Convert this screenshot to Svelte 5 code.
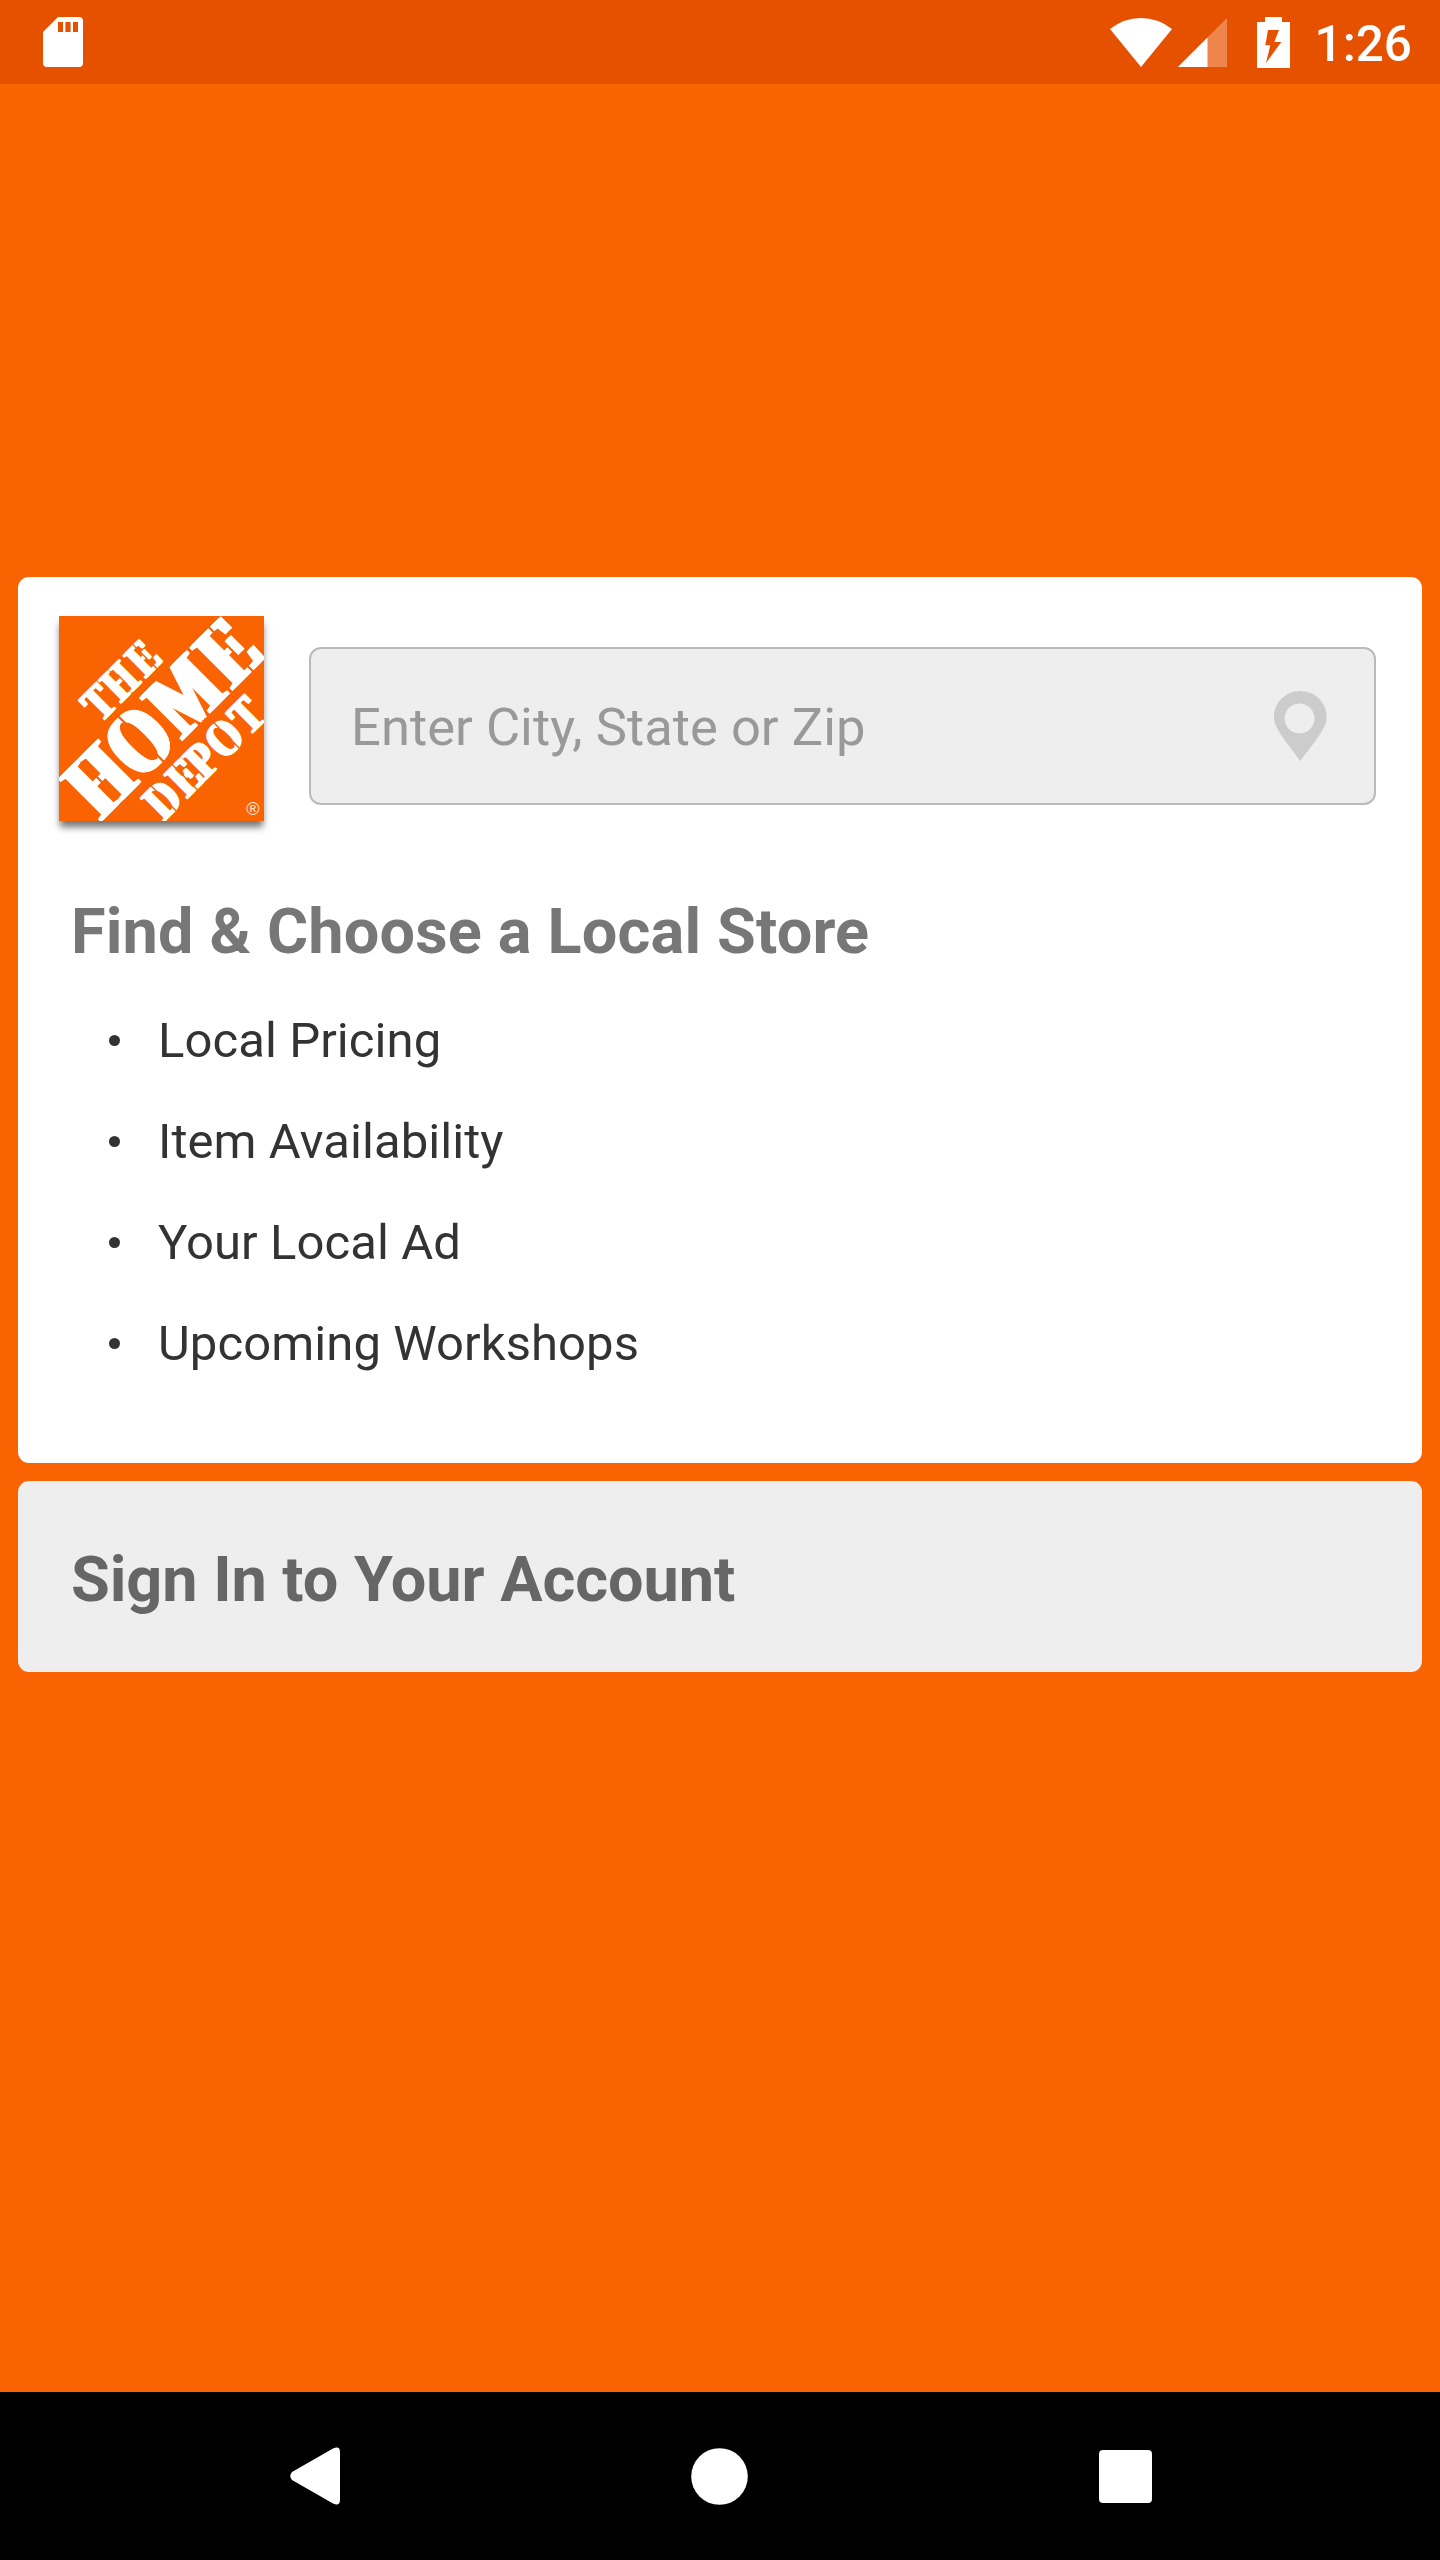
<script>
  const benefits = ['Local Pricing', 'Item Availability', 'Your Local Ad', 'Upcoming Workshops'];
</script>

<div class="screen">
  <header class="status">
    <svg class="sd" width="40" height="50" viewBox="0 0 40 50">
      <path fill="#fff" fill-rule="evenodd" d="M15 0H36a4 4 0 0 1 4 4V46a4 4 0 0 1-4 4H4a4 4 0 0 1-4-4V15ZM15 5V15H20V5ZM22.4 5V15H27.6V5ZM30 5V15H35V5Z" />
    </svg>
    <div class="indicators">
      <svg width="62" height="49" viewBox="0 0 62 49">
        <path fill="#fff" d="M0 11Q14 0 31 0T62 11L31 49Z" />
      </svg>
      <svg class="signal" width="49" height="49" viewBox="0 0 49 49">
        <path fill="#fff" fill-opacity=".3" d="M0 49H49V0Z" />
        <path fill="#fff" d="M0 49H29.5V19.5Z" />
      </svg>
      <svg class="battery" width="33" height="51" viewBox="0 0 33 51">
        <path fill="#fff" fill-rule="evenodd" d="M8 0H25V5H33V51H0V5H8ZM11 13L8.3 28.3H13.3L9 46L24.3 25H17.3L22 13Z" />
      </svg>
      <span class="time">1:26</span>
    </div>
  </header>

  <main>
    <section class="card finder">
      <div class="top">
        <svg class="logo" width="205" height="205" viewBox="0 0 205 205">
          <defs>
            <clipPath id="tile"><rect width="205" height="205" /></clipPath>
          </defs>
          <rect width="205" height="205" fill="#f96302" />
          <g clip-path="url(#tile)">
            <g transform="translate(.5 .5) rotate(-45)" class="brand">
              <text id="w1" transform="translate(0 104.7) scale(.76 1)" font-size="49" x="-60 -23 23">THE</text>
              <text id="w2" transform="translate(0 174.4) scale(.74 1)" font-size="92" x="-154 -79 1 97">HOME</text>
              <text id="w3" transform="translate(0 219)  scale(.78 1)" font-size="51" x="-91 -49 -16 19 63">DEPOT</text>
              <!-- shifted copies thicken the upright stems -->
              <use href="#w1" x="-1.3" /><use href="#w1" x="1.3" />
              <use href="#w2" x="-3" /><use href="#w2" x="3" />
              <use href="#w3" x="-1.3" /><use href="#w3" x="1.3" />
              <!-- stencil breaks -->
              <g class="cuts">
                <path d="M-87 136V152M-29 111V126M-29 163V178M98 110V178" />
                <path class="fine" d="M0 82V96M32 70V107M-55 184V192M-55 212V221M-25 184V221M34 183V192M34 212V222" />
              </g>
            </g>
            <text class="reg" x="194" y="198.8" text-anchor="middle">®</text>
          </g>
        </svg>
        <div class="field">
          <input type="text" placeholder="Enter City, State or Zip" aria-label="City, state or zip" />
          <svg class="pin" width="53" height="70" viewBox="0 0 53 70">
            <path fill="#ccc" fill-rule="evenodd" d="M26.3 0C41 0 52.7 11.500 52.700 26C52.700 38 38 54 26.300 70C15 54 0 38 0 26C0 11.500 11.600 0 26.300 0ZM25.500 12.500a15 15 0 1 0 .01 0Z" />
          </svg>
        </div>
      </div>
      <h1>Find &amp; Choose a Local Store</h1>
      <ul>
        {#each benefits as benefit}
          <li>{benefit}</li>
        {/each}
      </ul>
    </section>

    <section class="card signin">
      <h2>Sign In to Your Account</h2>
    </section>
  </main>

  <nav>
    <svg width="50" height="58" viewBox="0 0 50 58">
      <path fill="#fff" d="M2 25L43 1.500Q50-1.500 50 5V53Q50 59.500 43 56.500L2 33Q-1.500 29 2 25Z" />
    </svg>
    <svg width="57" height="57" viewBox="0 0 57 57"><circle cx="28.5" cy="28.5" r="28.3" fill="#fff" /></svg>
    <svg width="53" height="53" viewBox="0 0 53 53"><rect width="53" height="53" rx="4" fill="#fff" /></svg>
  </nav>
</div>

<style>
  :global(body) {
    margin: 0;
  }

  .screen {
    width: 1440px;
    height: 2560px;
    display: flex;
    flex-direction: column;
    background: #f96302;
    font-family: Roboto, sans-serif;
    overflow: hidden;
  }

  svg {
    display: block;
    flex: none;
  }

  .status {
    height: 84px;
    box-sizing: border-box;
    padding: 0 28px 0 43px;
    display: flex;
    align-items: center;
    justify-content: space-between;
    background: #e65100;
  }

  .indicators {
    display: flex;
    align-items: center;
  }

  .signal {
    margin-left: 6px;
  }

  .battery {
    margin-left: 30px;
  }

  .time {
    margin-left: 25px;
    padding-top: 4px;
    white-space: nowrap;
    color: #fff;
    font-size: 49.5px;
    line-height: 58px;
    font-weight: 500;
  }

  main {
    flex: 1;
    padding: 493px 18px 0;
    display: flex;
    flex-direction: column;
    gap: 18px;
  }

  .card {
    box-sizing: border-box;
    border-radius: 11px;
    background: #fff;
  }

  .finder {
    height: 886px;
    padding: 39px 46px 67px 41px;
  }

  .top {
    height: 279px;
    display: flex;
    align-items: flex-start;
    gap: 45px;
  }

  .logo {
    box-shadow: 0 7px 7px -1px rgba(0, 0, 0, 0.55);
  }

  .brand text {
    font-family: 'Liberation Serif', serif;
    font-weight: 700;
    fill: #fff;
    stroke: #fff;
    stroke-width: 1px;
  }

  .cuts path {
    fill: none;
    stroke: #f96302;
    stroke-width: 2.2px;
  }

  .cuts .fine {
    stroke-width: 1.4px;
  }

  .reg {
    font-family: 'Liberation Sans', sans-serif;
    font-size: 18px;
    fill: #ffe3cf;
  }

  .field {
    flex: 1;
    height: 158px;
    box-sizing: border-box;
    margin-top: 31px;
    padding: 0 47px 0 40px;
    display: flex;
    align-items: center;
    border: 2px solid #bababa;
    border-radius: 12px;
    background: #eee;
  }

  input {
    flex: 1;
    min-width: 0;
    height: 66px;
    margin: 0;
    padding: 1px 0 0;
    border: 0;
    outline: 0;
    background: transparent;
    font: 400 52.5px/62px Roboto, sans-serif;
    letter-spacing: 0.04px;
    color: #333;
  }

  input::placeholder {
    color: #999;
    opacity: 1;
  }

  h1,
  h2 {
    margin: 0;
    font-size: 63px;
    line-height: 74px;
    font-weight: 700;
  }

  h1 {
    padding-left: 12px;
    color: #777;
    letter-spacing: 0.17px;
  }

  ul {
    list-style: none;
    margin: 21px 0 0;
    padding: 0 0 0 50px;
  }

  li {
    display: flex;
    align-items: center;
    gap: 38px;
    font-size: 49px;
    line-height: 101px;
    letter-spacing: 0.08px;
    color: #333;
  }

  li::before {
    content: '';
    width: 11px;
    height: 11px;
    border-radius: 50%;
    background: #333;
  }

  .signin {
    height: 191px;
    padding: 7px 53px 0;
    display: flex;
    align-items: center;
    background: #eee;
  }

  h2 {
    color: #666;
    letter-spacing: -0.06px;
  }

  nav {
    height: 168px;
    box-sizing: border-box;
    padding: 0 288px 0 290px;
    display: flex;
    align-items: center;
    justify-content: space-between;
    background: #000;
  }
</style>
